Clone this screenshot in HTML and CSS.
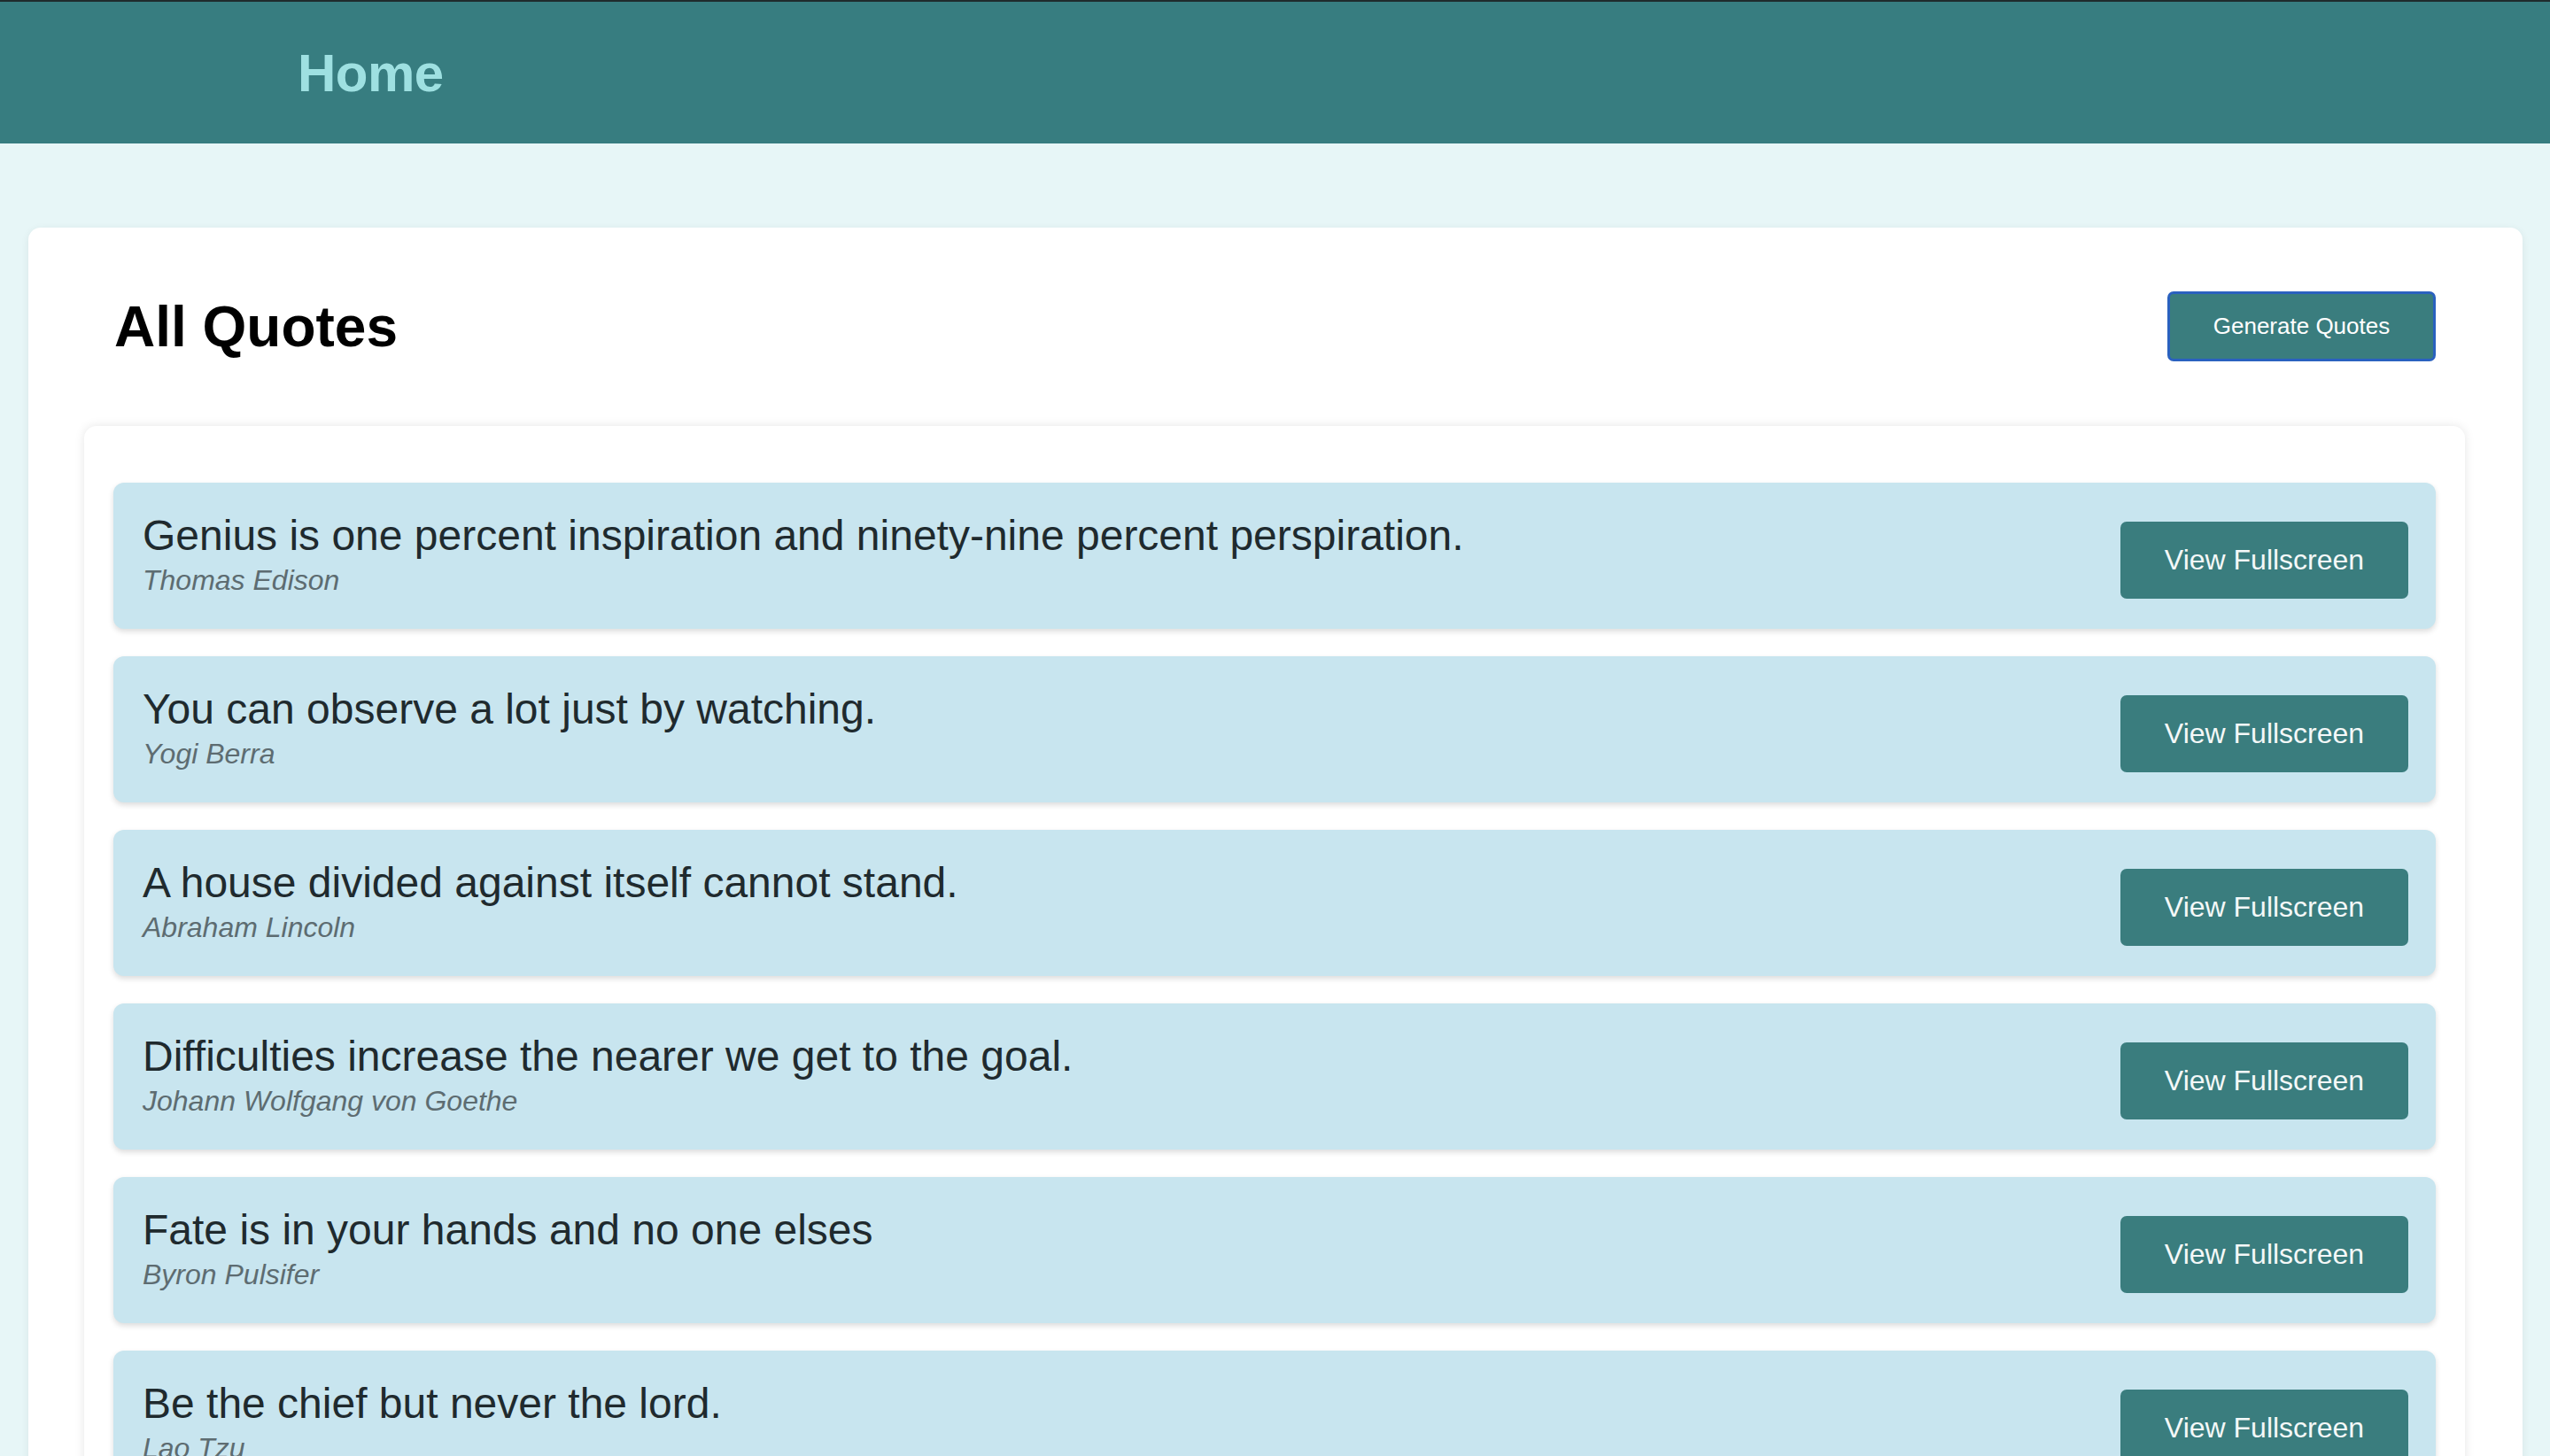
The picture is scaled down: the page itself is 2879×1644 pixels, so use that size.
FILE: index.html
```html
<!DOCTYPE html>
<html lang="en">
<head>
<meta charset="utf-8">
<title>Home</title>
<link rel="stylesheet" href="styles.css">
</head>
<body>
<header class="topbar">
  <a class="brand" href="#">Home</a>
</header>
<main class="page">
  <section class="panel">
    <div class="panel-head">
      <h1 class="title">All Quotes</h1>
      <button class="btn-generate">Generate Quotes</button>
    </div>
    <div class="list-card">
      <div class="quote">
        <div class="quote-body">
          <p class="quote-text">Genius is one percent inspiration and ninety-nine percent perspiration.</p>
          <p class="quote-author">Thomas Edison</p>
        </div>
        <button class="btn-view">View Fullscreen</button>
      </div>
      <div class="quote">
        <div class="quote-body">
          <p class="quote-text">You can observe a lot just by watching.</p>
          <p class="quote-author">Yogi Berra</p>
        </div>
        <button class="btn-view">View Fullscreen</button>
      </div>
      <div class="quote">
        <div class="quote-body">
          <p class="quote-text">A house divided against itself cannot stand.</p>
          <p class="quote-author">Abraham Lincoln</p>
        </div>
        <button class="btn-view">View Fullscreen</button>
      </div>
      <div class="quote">
        <div class="quote-body">
          <p class="quote-text">Difficulties increase the nearer we get to the goal.</p>
          <p class="quote-author">Johann Wolfgang von Goethe</p>
        </div>
        <button class="btn-view">View Fullscreen</button>
      </div>
      <div class="quote">
        <div class="quote-body">
          <p class="quote-text">Fate is in your hands and no one elses</p>
          <p class="quote-author">Byron Pulsifer</p>
        </div>
        <button class="btn-view">View Fullscreen</button>
      </div>
      <div class="quote">
        <div class="quote-body">
          <p class="quote-text">Be the chief but never the lord.</p>
          <p class="quote-author">Lao Tzu</p>
        </div>
        <button class="btn-view">View Fullscreen</button>
      </div>
    </div>
  </section>
</main>
</body>
</html>
```
FILE: styles.css
```css
* { box-sizing: border-box; }

html, body {
  margin: 0;
  padding: 0;
}

body {
  background: #e7f6f7;
  font-family: "Liberation Sans", Arial, Helvetica, sans-serif;
  color: #1f2a2e;
}

.topbar {
  height: 162px;
  background: #377d80;
  border-top: 2px solid #1f2b2c;
  display: flex;
  align-items: center;
  padding-left: 336px;
}

.brand {
  color: #9ee0e1;
  font-weight: bold;
  font-size: 60px;
  text-decoration: none;
  letter-spacing: -0.5px;
}

.page {
  padding: 95px 31px 0 32px;
}

.panel {
  background: #ffffff;
  border-radius: 14px;
  box-shadow: 0 2px 10px rgba(0, 0, 0, 0.07);
  padding: 64px 65px 64px 63px;
}

.panel-head {
  display: flex;
  align-items: center;
  justify-content: space-between;
  padding: 0 33px 0 34px;
  height: 95px;
  margin-bottom: 65px;
}

.title {
  margin: 0;
  font-size: 64px;
  font-weight: bold;
  color: #000;
}

.btn-generate {
  width: 303px;
  height: 79px;
  background: #3a7d7e;
  color: #ffffff;
  border: 3px solid #2a61bf;
  border-radius: 7px;
  font-family: inherit;
  font-size: 26px;
  padding: 0;
}

.list-card {
  background: #ffffff;
  border-radius: 14px;
  box-shadow: 0 0 12px rgba(0, 0, 0, 0.1);
  padding: 64px 33px 32px;
  display: flex;
  flex-direction: column;
  gap: 31px;
}

.quote {
  background: #c8e5ef;
  border-radius: 12px;
  box-shadow: 0 3px 6px rgba(0, 0, 0, 0.14);
  display: flex;
  align-items: center;
  justify-content: space-between;
  padding: 32px 31px 36px 33px;
}

.quote-body {
  display: flex;
  flex-direction: column;
}

.quote-text {
  margin: 0;
  font-size: 48px;
  line-height: 55px;
  color: #1f2a2e;
}

.quote-author {
  margin: 5px 0 0;
  font-size: 32px;
  line-height: 37px;
  font-style: italic;
  color: #5d6c71;
}

.btn-view {
  width: 325px;
  height: 87px;
  margin: 12px 0 -2px;
  background: #3a7d7e;
  color: #f4f8f8;
  border: none;
  border-radius: 7px;
  font-family: inherit;
  font-size: 32px;
  padding: 0;
  flex-shrink: 0;
}
```
